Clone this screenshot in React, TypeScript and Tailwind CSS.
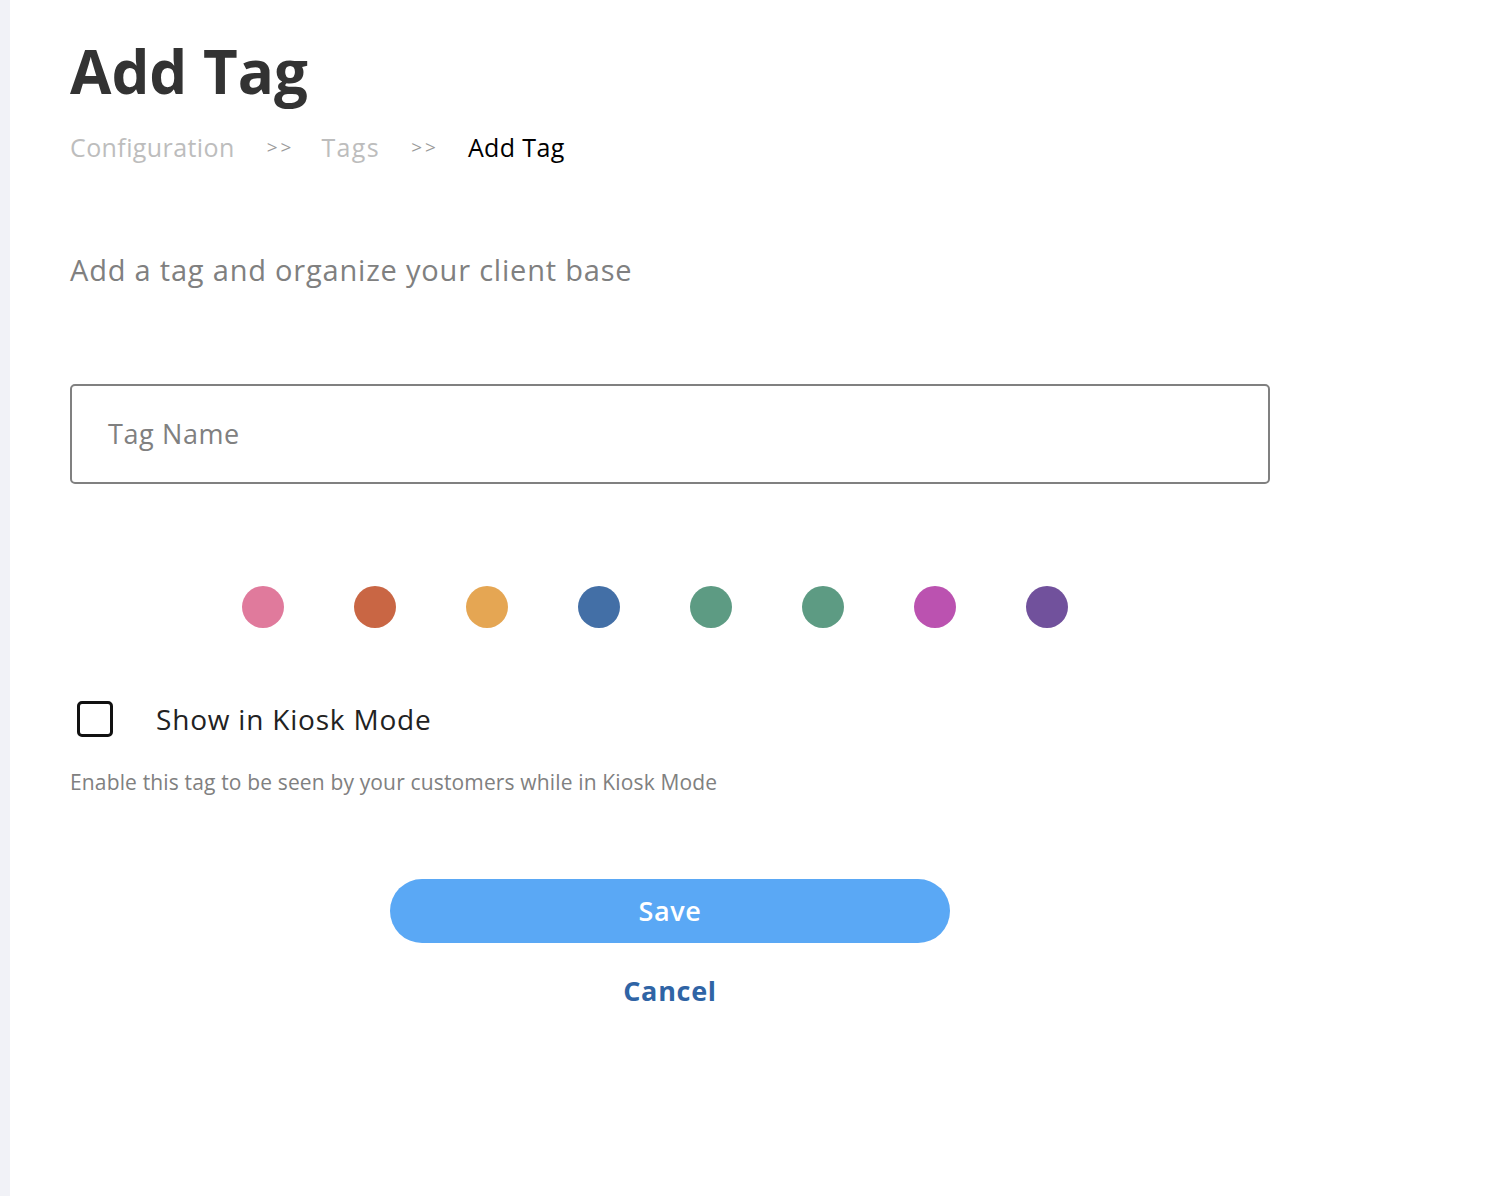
import React from "react";

const dots = ["#e07a9c", "#c96644", "#e5a653", "#436fa6", "#5d9b83", "#5d9b83", "#bb52b0", "#71519c"];

export default function App() {
  return (
    <div className="flex min-h-[1196px] w-full bg-white" style={{ fontFamily: "'Open Sans', 'Noto Sans', sans-serif" }}>
      <div className="w-[10px] shrink-0 bg-[#f1f2f7]" />
      <div className="flex flex-col pl-[60px] pt-[36px] w-[1260px]">
        <h1 className="text-[60px] leading-[70px] font-bold text-[#333333]">Add Tag</h1>
        <div className="mt-[25px] flex items-center text-[25px] leading-[32px] tracking-[0.4px]">
          <span className="text-[#bdbdbd]">Configuration</span>
          <span className="ml-[32px] text-[#9a9a9a] text-[19px] tracking-[3px]">&gt;&gt;</span>
          <span className="ml-[27px] text-[#bdbdbd] tracking-[1.4px]">Tags</span>
          <span className="ml-[31px] text-[#9a9a9a] text-[19px] tracking-[3px]">&gt;&gt;</span>
          <span className="ml-[29px] text-black">Add Tag</span>
        </div>
        <p className="mt-[89px] text-[29px] leading-[36px] tracking-[0.8px] text-[#808080]">Add a tag and organize your client base</p>
        <div className="mt-[96px] h-[100px] w-[1200px] rounded-[5px] border-2 border-[#808080] flex items-center pl-[36px]">
          <span className="text-[27px] tracking-[0.6px] text-[#808080]">Tag Name</span>
        </div>
        <div className="mt-[102px] flex pl-[172px] gap-[70px]">
          {dots.map((c, i) => (
            <div key={i} className="h-[42px] w-[42px] rounded-full" style={{ backgroundColor: c }} />
          ))}
        </div>
        <div className="mt-[73px] flex items-center">
          <div className="ml-[7px] h-[36px] w-[36px] rounded-[5px] border-[3px] border-[#111111]" />
          <span className="ml-[43px] text-[28px] leading-[36px] tracking-[0.8px] text-[#222222]">Show in Kiosk Mode</span>
        </div>
        <p className="mt-[31px] text-[21px] leading-[28px] tracking-[0.15px] text-[#808080]">Enable this tag to be seen by your customers while in Kiosk Mode</p>
        <div className="mt-[83px] flex flex-col items-center w-[1200px]">
          <button className="h-[64px] w-[560px] rounded-full bg-[#5aa8f5] text-white text-[27px] tracking-[0.6px] font-semibold">Save</button>
          <button className="mt-[28px] text-[27px] tracking-[0.7px] font-bold text-[#2f64a5]">Cancel</button>
        </div>
      </div>
    </div>
  );
}
